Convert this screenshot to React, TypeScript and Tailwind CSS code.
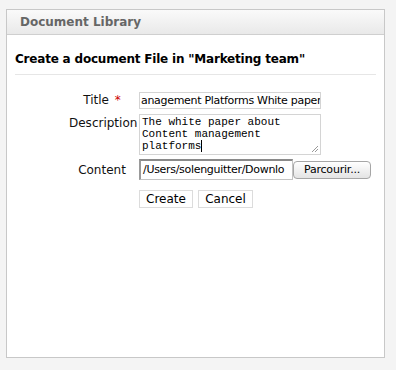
import React from 'react';

const sans = "font-['DejaVu_Sans',sans-serif]";

function Label({ children }: { children: React.ReactNode }) {
  return (
    <div className="w-[66px] shrink-0 text-center whitespace-nowrap text-[12px] text-[#111]">
      {children}
    </div>
  );
}

export default function App() {
  return (
    <div className={`w-[396px] h-[370px] bg-[#f4f4f4] pt-[9px] pl-[6px] ${sans}`}>
      <div className="w-[379px] h-[349px] bg-white border border-[#c8c8c8] flex flex-col">
        {/* Panel header */}
        <div className="h-[25px] shrink-0 bg-gradient-to-b from-[#fafafa] to-[#e9e9e9] border-b border-[#cfcfcf] flex items-center pl-[13px]">
          <span className="text-[12px] font-bold text-[#666]">Document Library</span>
        </div>

        <div className="px-[8px]">
          <div className="pt-[15px] pb-[6px] text-[12px] font-bold tracking-[-0.2px] text-black border-b border-[#e6e6e6]">
            Create a document File in "Marketing team"
          </div>

          {/* Form */}
          <div className="pt-[16px] pl-[54px] flex flex-col">
            <div className="flex items-center gap-[4px]">
              <Label>
                Title <span className="text-[#c00] ml-[2px]">*</span>
              </Label>
              <div className="w-[182px] h-[17px] border border-[#d4d4d4] overflow-hidden whitespace-nowrap text-[11px] tracking-[-0.3px] leading-[15px] text-black pl-[1px]">
                anagement Platforms White paper
              </div>
            </div>

            <div className="flex items-start gap-[4px] mt-[5px]">
              <Label>Description</Label>
              <div className="relative w-[182px] h-[41px] border border-[#d4d4d4] pl-[2px] pt-[1px] font-['Liberation_Mono',monospace] text-[11px] leading-[12px] text-black">
                <div>The white paper about</div>
                <div>Content management</div>
                <div>
                  platforms<span className="inline-block w-px h-[12px] bg-black align-top" />
                </div>
                <svg className="absolute right-[1px] bottom-[1px]" width="9" height="9" viewBox="0 0 9 9">
                  <path d="M8 2 L2 8 M8 5 L5 8" stroke="#999" strokeWidth="1" />
                </svg>
              </div>
            </div>

            <div className="flex items-center gap-[4px] mt-[4px]">
              <Label>Content</Label>
              <div className="flex items-center">
                <div className="w-[154px] h-[21px] border border-[#c4c4c4] border-t-[2px] border-l-[2px] border-t-[#8a8a8a] border-l-[#9a9a9a] overflow-hidden whitespace-nowrap text-[11px] tracking-[-0.3px] leading-[17px] text-black pl-[2px]">
                  /Users/solenguitter/Downlo
                </div>
                <div className="w-[78px] h-[18px] rounded-[4px] border border-[#a6a6a6] bg-gradient-to-b from-white to-[#e4e4e4] text-[11px] tracking-[-0.2px] leading-[16px] text-black text-center whitespace-nowrap">
                  Parcourir...
                </div>
              </div>
            </div>

            <div className="flex gap-[5px] mt-[10px] ml-[70px]">
              <div className="w-[54px] h-[18px] border border-[#dcdcdc] text-[12px] leading-[16px] text-center text-black">
                Create
              </div>
              <div className="w-[55px] h-[18px] border border-[#dcdcdc] text-[12px] leading-[16px] text-center text-black">
                Cancel
              </div>
            </div>
          </div>
        </div>
      </div>
    </div>
  );
}
